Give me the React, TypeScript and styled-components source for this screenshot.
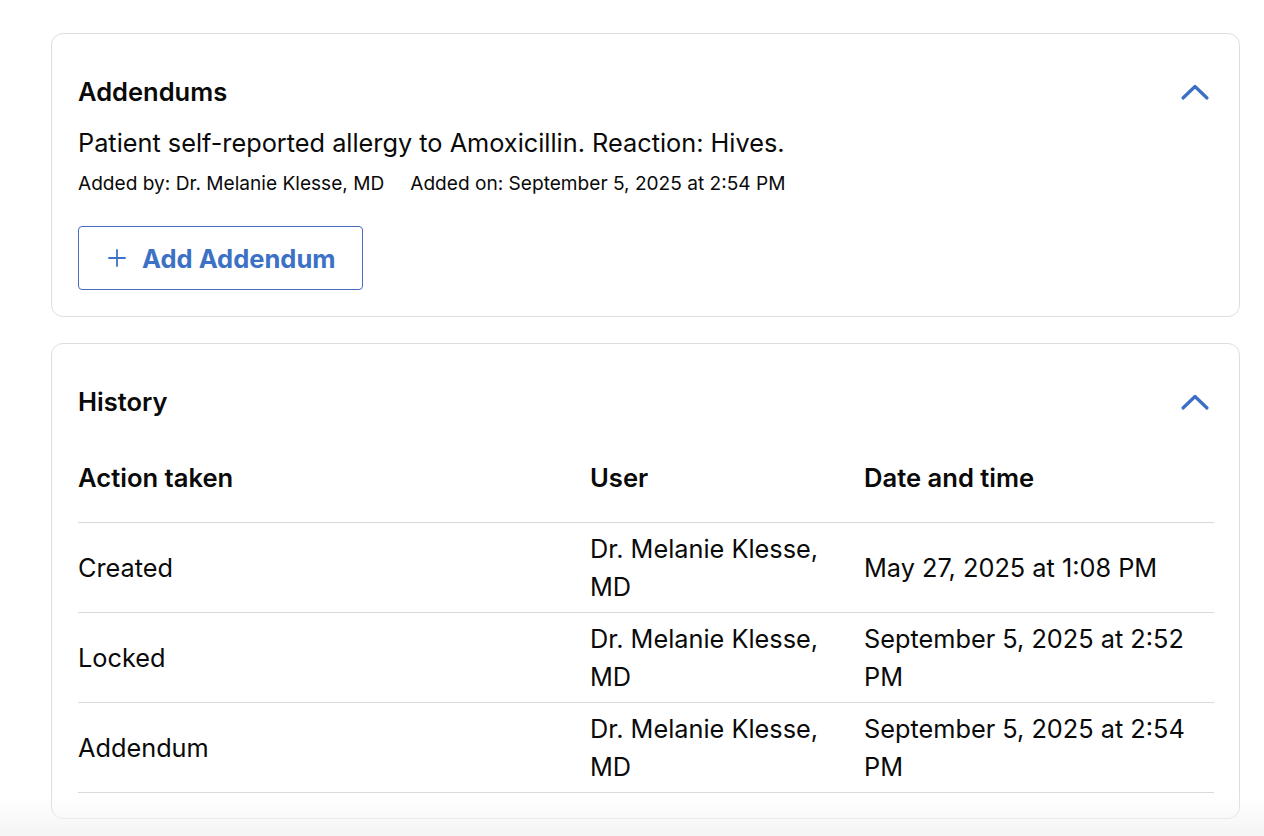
import React from "react";
import styled, { createGlobalStyle } from "styled-components";

const Global = createGlobalStyle`
  html, body { margin: 0; padding: 0; background: #ffffff; }
  body { font-family: Inter, "Noto Sans", "Liberation Sans", sans-serif; color: #0a0a0a; -webkit-font-smoothing: antialiased; }
  * { box-sizing: border-box; }
`;

const Page = styled.main`
  display: flex;
  flex-direction: column;
  gap: 26px;
  padding: 33px 24px 40px 51px;
`;

const Card = styled.section<{ $bottom: number }>`
  border: 1px solid #dedede;
  border-radius: 12px;
  background: #fff;
  padding: 42px 25px ${(p) => p.$bottom}px 26px;
  display: flex;
  flex-direction: column;
`;

const Header = styled.div`
  display: flex;
  align-items: center;
  justify-content: space-between;
  height: 32px;
`;

const Title = styled.h2`
  margin: 0;
  font-size: 25.5px;
  line-height: 32px;
  font-weight: 600;
`;

const Toggle = styled.button`
  border: none;
  background: none;
  padding: 0;
  margin-right: 3px;
  display: flex;
  align-items: center;
  cursor: pointer;
`;

const Note = styled.p`
  margin: 19px 0 0;
  font-size: 25.3px;
  line-height: 32px;
  font-weight: 400;
`;

const Meta = styled.div`
  display: flex;
  gap: 26px;
  margin-top: 12px;
  font-size: 19.1px;
  line-height: 24px;
`;

const AddButton = styled.button`
  align-self: flex-start;
  margin-top: 31px;
  height: 64px;
  width: 285px;
  display: flex;
  align-items: center;
  gap: 16px;
  padding: 0 0 0 29px;
  border: 1px solid #4a6dbb;
  border-radius: 4px;
  background: #fff;
  color: #3c71c6;
  font-family: inherit;
  font-size: 25.5px;
  font-weight: 700;
  cursor: pointer;
`;

const Table = styled.div`
  margin-top: 28px;
  display: grid;
  grid-template-columns: 512px 274px 1fr;
`;

const HeadCell = styled.div`
  padding: 16px 12px 28px 0;
  font-size: 25.6px;
  line-height: 32px;
  font-weight: 600;
  border-bottom: 1px solid #d9d9d9;
`;

const Cell = styled.div`
  display: flex;
  align-items: center;
  padding: 7px 12px 6px 0;
  font-size: 25.3px;
  line-height: 38px;
  border-bottom: 1px solid #d9d9d9;
`;

const Fade = styled.div`
  position: fixed;
  left: 0;
  right: 0;
  bottom: 0;
  height: 40px;
  pointer-events: none;
  background: linear-gradient(to bottom, rgba(245,245,245,0), rgba(243,243,243,0.9));
`;

const Chevron = () => (
  <svg width="32" height="20" viewBox="0 0 32 20" fill="none">
    <polyline points="4,16 16,4.5 28,16" stroke="#3b6fc6" strokeWidth="3.2" strokeLinecap="round" strokeLinejoin="round" />
  </svg>
);

const Plus = () => (
  <svg width="18" height="18" viewBox="0 0 18 18" fill="none">
    <path d="M9 1v16M1 9h16" stroke="#3c71c6" strokeWidth="1.8" strokeLinecap="round" />
  </svg>
);

const rows = [
  { action: "Created", user: "Dr. Melanie Klesse, MD", date: "May 27, 2025 at 1:08 PM" },
  { action: "Locked", user: "Dr. Melanie Klesse, MD", date: "September 5, 2025 at 2:52 PM" },
  { action: "Addendum", user: "Dr. Melanie Klesse, MD", date: "September 5, 2025 at 2:54 PM" },
];

export default function App() {
  return (
    <>
      <Global />
      <Page>
        <Card $bottom={26}>
          <Header>
            <Title>Addendums</Title>
            <Toggle aria-label="Collapse"><Chevron /></Toggle>
          </Header>
          <Note>Patient self-reported allergy to Amoxicillin. Reaction: Hives.</Note>
          <Meta>
            <span>Added by: Dr. Melanie Klesse, MD</span>
            <span>Added on: September 5, 2025 at 2:54 PM</span>
          </Meta>
          <AddButton><Plus />Add Addendum</AddButton>
        </Card>
        <Card $bottom={25}>
          <Header>
            <Title>History</Title>
            <Toggle aria-label="Collapse"><Chevron /></Toggle>
          </Header>
          <Table>
            <HeadCell>Action taken</HeadCell>
            <HeadCell>User</HeadCell>
            <HeadCell>Date and time</HeadCell>
            {rows.map((r) => (
              <React.Fragment key={r.action}>
                <Cell>{r.action}</Cell>
                <Cell>{r.user}</Cell>
                <Cell>{r.date}</Cell>
              </React.Fragment>
            ))}
          </Table>
        </Card>
      </Page>
      <Fade />
    </>
  );
}
